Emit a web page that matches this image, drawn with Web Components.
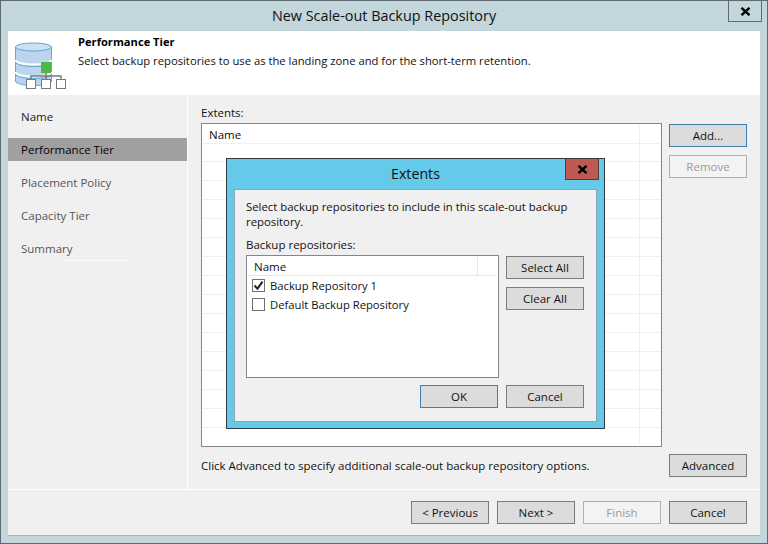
<!DOCTYPE html>
<html>
<head>
<meta charset="utf-8">
<title>New Scale-out Backup Repository</title>
<style>
  html, body { margin: 0; padding: 0; background: #c3d6db; }
  body { font: 11.5px "Open Sans", "Liberation Sans", sans-serif; color: #111; }
</style>
</head>
<body>

<wizard-window heading="New Scale-out Backup Repository">
  <wizard-header slot="header" heading="Performance Tier" text="Select backup repositories to use as the landing zone and for the short-term retention."></wizard-header>
  <wizard-steps slot="steps">
    <wizard-step state="done">Name</wizard-step>
    <wizard-step state="active">Performance Tier</wizard-step>
    <wizard-step>Placement Policy</wizard-step>
    <wizard-step>Capacity Tier</wizard-step>
    <wizard-step rule>Summary</wizard-step>
  </wizard-steps>

  <extents-page slot="page">
    <extents-dialog slot="dialog"></extents-dialog>
  </extents-page>

  <ui-button slot="footer">&lt; Previous</ui-button>
  <ui-button slot="footer">Next &gt;</ui-button>
  <ui-button slot="footer" disabled>Finish</ui-button>
  <ui-button slot="footer">Cancel</ui-button>
</wizard-window>

<script>
class UiButton extends HTMLElement {
  connectedCallback() {
    this.attachShadow({ mode: 'open' });
    this.shadowRoot.innerHTML = `
      <style>
        :host {
          display: flex;
          align-items: center;
          justify-content: center;
          box-sizing: border-box;
          width: 78px;
          height: 23px;
          flex: none;
          border: 1px solid #7c7c7c;
          background: #dcdcdc;
          color: #111;
          padding-bottom: 1px;
        }
        :host([default]) {
          border-color: #3d7fb0;
        }
        :host([disabled]) {
          border-color: #b0b0b0;
          background: #f3f3f3;
          color: #9a9a9a;
        }
      </style>
      <slot></slot>
    `;
  }
}

class WizardWindow extends HTMLElement {
  connectedCallback() {
    this.attachShadow({ mode: 'open' });
    this.shadowRoot.innerHTML = `
      <style>
        :host {
          display: block;
          box-sizing: border-box;
          width: 768px;
          height: 544px;
          background: #c3d6db;
          border: 1px solid #5e6b72;
        }
        .title {
          display: flex;
          box-sizing: border-box;
          height: 30px;
          padding-bottom: 2px;
          position: relative;
          justify-content: center;
          align-items: center;
          font-size: 14.4px;
          color: #111;
        }
        .close {
          position: absolute;
          top: -1px;
          right: 5px;
          width: 34px;
          height: 22px;
          box-sizing: border-box;
          border: 1px solid #5e6b72;
          display: flex;
          align-items: center;
          justify-content: center;
        }
        .client {
          margin: 0 7px;
          height: 505px;
          display: flex;
          flex-direction: column;
          background: #f0f0f0;
          border-bottom: 1px solid #a9b4b8;
          box-sizing: border-box;
        }
        .main {
          display: flex;
          height: 394px;
          flex: none;
          border-bottom: 1px solid #fff;
        }
        ::slotted([slot=steps]) {
          width: 179px;
          flex: none;
          border-right: 1px solid #fff;
        }
        ::slotted([slot=page]) {
          flex: 1;
          min-width: 0;
        }
        .footer {
          display: flex;
          justify-content: flex-end;
          gap: 8px;
          padding: 11px 13px 0 0;
        }
      </style>
      <div class="title">
        <span>${this.getAttribute('heading')}</span>
        <div class="close">
          <svg width="11" height="9" viewBox="0 0 11 9"><path d="M1.5 .8l8 7.4M9.5 .8l-8 7.4" stroke="#000" stroke-width="2.4" fill="none"/></svg>
        </div>
      </div>
      <div class="client">
        <slot name="header"></slot>
        <div class="main">
          <slot name="steps"></slot>
          <slot name="page"></slot>
        </div>
        <div class="footer"><slot name="footer"></slot></div>
      </div>
    `;
  }
}

class WizardHeader extends HTMLElement {
  connectedCallback() {
    this.attachShadow({ mode: 'open' });
    this.shadowRoot.innerHTML = `
      <style>
        :host {
          display: flex;
          height: 64px;
          flex: none;
          background: #fff;
        }
        svg {
          flex: none;
          margin: 11px 0 0 0;
        }
        .text {
          margin-left: 12px;
          padding-top: 2px;
        }
        h1 {
          margin: 0;
          font-size: 11.15px;
          line-height: 17px;
          font-weight: 700;
          color: #000;
        }
        p {
          margin: 3px 0 0;
          font-size: 11.25px;
          line-height: 16px;
        }
      </style>
      <svg width="58" height="48" viewBox="8 42 58 48">
        <path d="M15.5 47v34c0 2.5 8 4.5 18 4.5s18-2 18-4.5V47z" fill="#bcd4ee" stroke="#5fa8d8"/>
        <path d="M15.5 60c0 2.5 8 4.5 18 4.5s18-2 18-4.5M15.5 72c0 2.5 8 4.5 18 4.5s18-2 18-4.5" fill="none" stroke="#fff" stroke-width="2"/>
        <path d="M15.5 62c0 2.5 8 4.5 18 4.5s18-2 18-4.5M15.5 74c0 2.5 8 4.5 18 4.5s18-2 18-4.5" fill="none" stroke="#5fa8d8"/>
        <ellipse cx="33.5" cy="47" rx="18" ry="4" fill="#cfe0f3" stroke="#5fa8d8"/>
        <rect x="41" y="62" width="10" height="11" fill="#4db848"/>
        <path d="M46 73v6M31 79v-3h30v3" fill="none" stroke="#7a7a7a" stroke-width="1.4"/>
        <rect x="26.5" y="79.5" width="9" height="9" fill="#fff" stroke="#7a7a7a"/>
        <rect x="41.5" y="79.5" width="9" height="9" fill="#fff" stroke="#7a7a7a"/>
        <rect x="56.5" y="79.5" width="9" height="9" fill="#fff" stroke="#7a7a7a"/>
      </svg>
      <div class="text">
        <h1>${this.getAttribute('heading')}</h1>
        <p>${this.getAttribute('text')}</p>
      </div>
    `;
  }
}

class WizardSteps extends HTMLElement {
  connectedCallback() {
    this.attachShadow({ mode: 'open' });
    this.shadowRoot.innerHTML = `
      <style>
        :host {
          display: flex;
          flex-direction: column;
          padding-top: 10px;
          gap: 10px;
        }
      </style>
      <slot></slot>
    `;
  }
}

class WizardStep extends HTMLElement {
  connectedCallback() {
    this.attachShadow({ mode: 'open' });
    this.shadowRoot.innerHTML = `
      <style>
        :host {
          display: flex;
          position: relative;
          align-items: center;
          height: 23px;
          padding-left: 13px;
          color: #555;
        }
        :host([state=done]) {
          color: #222;
        }
        :host([state=active]) {
          background: #a0a0a0;
          color: #000;
        }
        :host([rule])::after {
          content: '';
          position: absolute;
          left: 56px;
          bottom: -1px;
          width: 64px;
          height: 1px;
          background: #fafafa;
        }
      </style>
      <slot></slot>
    `;
  }
}

class ExtentsPage extends HTMLElement {
  connectedCallback() {
    this.attachShadow({ mode: 'open' });
    this.shadowRoot.innerHTML = `
      <style>
        :host {
          display: block;
          position: relative;
          padding: 9px 13px 0 13px;
        }
        .label {
          height: 19px;
          line-height: 17px;
        }
        .row {
          display: flex;
          gap: 7px;
        }
        .grid {
          box-sizing: border-box;
          width: 461px;
          height: 324px;
          flex: none;
          border: 1px solid #85858f;
          background:
            linear-gradient(#fff, #fff) 0 0 / 100% 19px no-repeat,
            linear-gradient(#fff, #fff) 0 100% / 100% 2px no-repeat,
            linear-gradient(90deg, transparent 437px, #efefef 437px, #efefef 438px, transparent 438px) 0 0 / 100% 100% no-repeat,
            repeating-linear-gradient(#fff 0, #fff 18px, #efefef 18px, #efefef 19px);
        }
        .head {
          display: flex;
          height: 18px;
          margin: 1px 1px 0;
          border-bottom: 1px solid #efefef;
        }
        .head span {
          box-sizing: border-box;
          width: 437px;
          padding-left: 6px;
          line-height: 20px;
          border-right: 1px solid #efefef;
        }
        .side {
          display: flex;
          flex-direction: column;
          gap: 8px;
          margin-top: 1px;
        }
        .hint {
          display: flex;
          justify-content: space-between;
          align-items: center;
          margin-top: 7px;
        }
        ::slotted([slot=dialog]) {
          position: absolute;
          left: 38px;
          top: 63px;
        }
      </style>
      <div class="label">Extents:</div>
      <div class="row">
        <div class="grid"><div class="head"><span>Name</span></div></div>
        <div class="side">
          <ui-button default>Add...</ui-button>
          <ui-button disabled>Remove</ui-button>
        </div>
      </div>
      <div class="hint">
        <span>Click Advanced to specify additional scale-out backup repository options.</span>
        <ui-button>Advanced</ui-button>
      </div>
      <slot name="dialog"></slot>
    `;
  }
}

class CheckRow extends HTMLElement {
  connectedCallback() {
    this.attachShadow({ mode: 'open' });
    const mark = this.hasAttribute('checked')
      ? '<svg width="11" height="11" viewBox="0 0 11 11"><path d="M1.5 5.5l3 3.2 5-7" fill="none" stroke="#222" stroke-width="2"/></svg>'
      : '';
    this.shadowRoot.innerHTML = `
      <style>
        :host {
          display: flex;
          align-items: center;
          gap: 5px;
          height: 19px;
          padding-left: 5px;
          font-size: 11.25px;
        }
        .box {
          box-sizing: border-box;
          width: 13px;
          height: 13px;
          border: 1px solid #707070;
          background: #fff;
          display: flex;
          align-items: center;
          justify-content: center;
        }
      </style>
      <div class="box">${mark}</div>
      <slot></slot>
    `;
  }
}

class ExtentsDialog extends HTMLElement {
  connectedCallback() {
    this.attachShadow({ mode: 'open' });
    this.shadowRoot.innerHTML = `
      <style>
        :host {
          display: block;
          box-sizing: border-box;
          width: 379px;
          height: 271px;
          background: #65c9ea;
          border: 1px solid #333c42;
        }
        .title {
          position: relative;
          box-sizing: border-box;
          height: 30px;
          padding-bottom: 2px;
          display: flex;
          align-items: center;
          justify-content: center;
          font-size: 14.2px;
          color: #111;
        }
        .close {
          position: absolute;
          top: 0;
          right: 5px;
          box-sizing: border-box;
          width: 34px;
          height: 21px;
          background: #bf5a52;
          border: 1px solid #5a3a38;
          border-top: 0;
          display: flex;
          align-items: center;
          justify-content: center;
        }
        .inner {
          box-sizing: border-box;
          margin: 0 7px;
          height: 233px;
          background: #f0f0f0;
          border: 1px solid #8fa3ad;
          padding: 9px 12px 0 11px;
        }
        p {
          margin: 0;
          font-size: 11.35px;
          line-height: 15px;
        }
        .label {
          margin-top: 7px;
          height: 19px;
          line-height: 17px;
        }
        .row {
          display: flex;
          justify-content: space-between;
        }
        .list {
          box-sizing: border-box;
          width: 253px;
          height: 123px;
          background: #fff;
          border: 1px solid #85858f;
        }
        .head {
          display: flex;
          height: 18px;
          margin: 1px 1px 0;
          border-bottom: 1px solid #e6e6e6;
        }
        .head span {
          box-sizing: border-box;
          width: 230px;
          padding-left: 6px;
          line-height: 20px;
          border-right: 1px solid #e6e6e6;
        }
        .side {
          display: flex;
          flex-direction: column;
          gap: 8px;
          margin-top: 1px;
        }
        .actions {
          display: flex;
          justify-content: flex-end;
          gap: 8px;
          margin-top: 7px;
        }
      </style>
      <div class="title">
        <span>Extents</span>
        <div class="close">
          <svg width="11" height="9" viewBox="0 0 11 9"><path d="M1.5 .8l8 7.4M9.5 .8l-8 7.4" stroke="#000" stroke-width="2.4" fill="none"/></svg>
        </div>
      </div>
      <div class="inner">
        <p>Select backup repositories to include in this scale-out backup repository.</p>
        <div class="label">Backup repositories:</div>
        <div class="row">
          <div class="list">
            <div class="head"><span>Name</span></div>
            <check-row checked>Backup Repository 1</check-row>
            <check-row>Default Backup Repository</check-row>
          </div>
          <div class="side">
            <ui-button>Select All</ui-button>
            <ui-button>Clear All</ui-button>
          </div>
        </div>
        <div class="actions">
          <ui-button default>OK</ui-button>
          <ui-button>Cancel</ui-button>
        </div>
      </div>
    `;
  }
}

customElements.define('ui-button', UiButton);
customElements.define('wizard-window', WizardWindow);
customElements.define('wizard-header', WizardHeader);
customElements.define('wizard-steps', WizardSteps);
customElements.define('wizard-step', WizardStep);
customElements.define('extents-page', ExtentsPage);
customElements.define('check-row', CheckRow);
customElements.define('extents-dialog', ExtentsDialog);
</script>
</body>
</html>
